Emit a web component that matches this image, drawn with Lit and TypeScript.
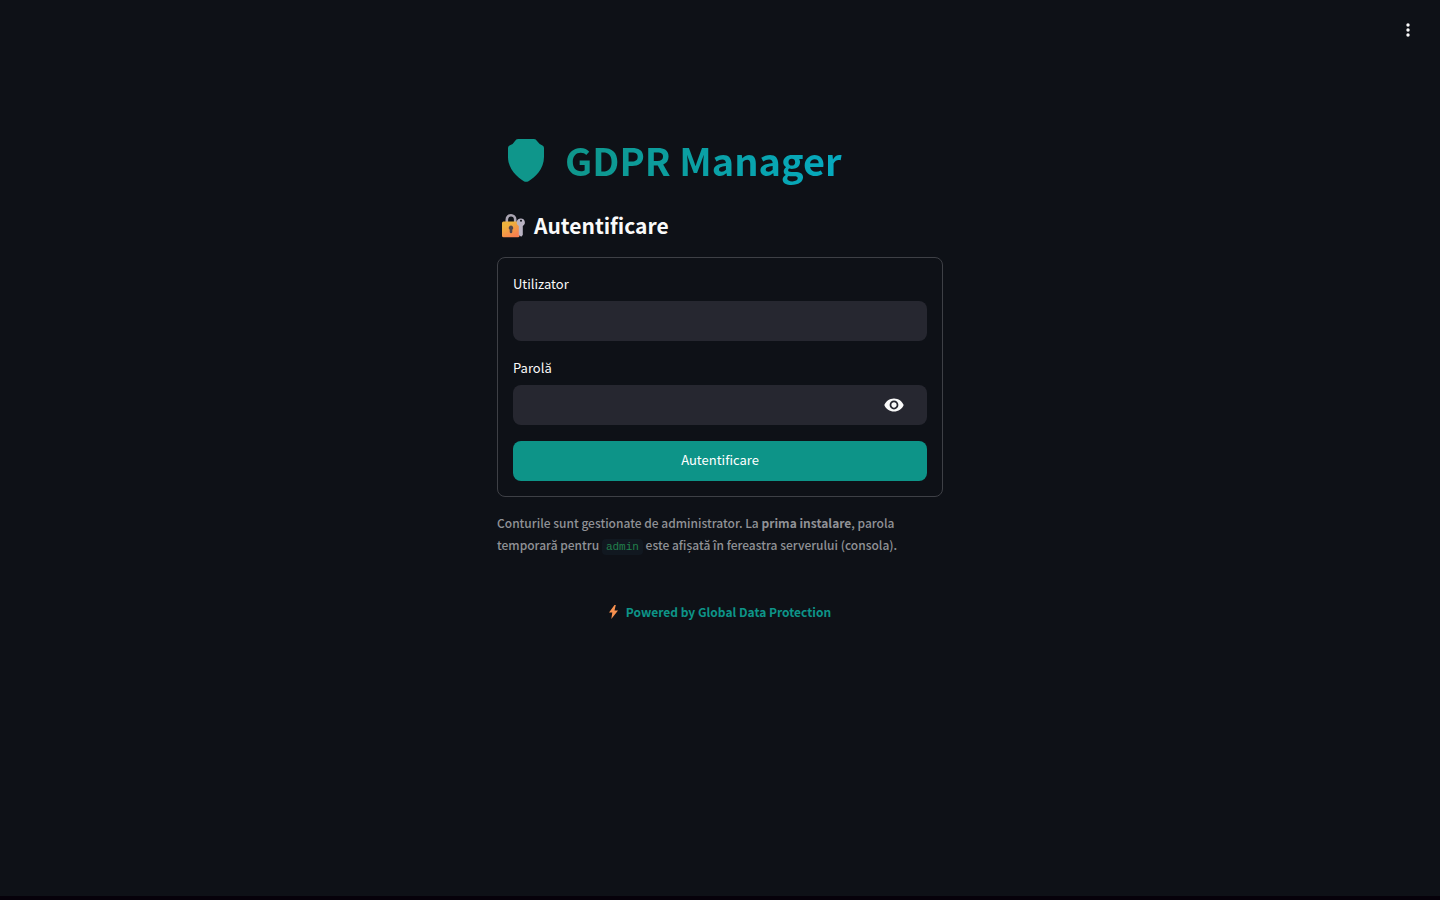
import { LitElement, html, css } from "lit";
import { customElement, state } from "lit/decorators.js";

@customElement("app-root")
export class AppRoot extends LitElement {
  @state() private revealed = false;

  static styles = css`
    :host {
      display: flex;
      flex-direction: column;
      box-sizing: border-box;
      min-height: 100vh;
      background: #0e1117;
      border-bottom: 4px solid #06010a;
      color: #fafafa;
      font-family: "Noto Sans CJK SC", "Noto Sans", sans-serif;
      font-size: 13px;
      line-height: 22px;
    }
    * {
      box-sizing: border-box;
    }
    button {
      border: 0;
      padding: 0;
      background: none;
      color: inherit;
      font: inherit;
      cursor: pointer;
    }
    svg {
      display: block;
    }
    .toolbar {
      display: flex;
      align-items: center;
      justify-content: flex-end;
      height: 60px;
      padding: 0 22px;
    }
    main {
      width: 100%;
      max-width: 478px;
      margin: 0 auto;
      padding: 72px 16px 16px;
    }
    h1,
    h2,
    p {
      margin: 0;
    }
    .brand {
      display: flex;
      align-items: center;
      gap: 20px;
      padding-left: 11px;
      font-size: 38px;
      line-height: 56px;
      font-weight: 700;
      white-space: nowrap;
    }
    .brand-name {
      background: linear-gradient(90deg, #0f968b, #06aabf);
      -webkit-background-clip: text;
      background-clip: text;
      color: transparent;
    }
    .heading {
      display: flex;
      align-items: center;
      gap: 8px;
      margin: 22px 0 17px;
      padding-left: 4px;
      font-size: 21px;
      line-height: 30px;
      font-weight: 700;
    }
    form {
      display: flex;
      flex-direction: column;
      gap: 16px;
      padding: 15px;
      border: 1px solid #3e4046;
      border-radius: 8px;
    }
    .field {
      display: flex;
      flex-direction: column;
      gap: 6px;
    }
    .box {
      display: flex;
      align-items: center;
      height: 40px;
      border-radius: 8px;
      background: #262730;
    }
    .box:focus-within {
      outline: 1px solid #0d9488;
    }
    .box input {
      flex: 1;
      min-width: 0;
      height: 100%;
      padding: 0 12px;
      border: 0;
      outline: 0;
      background: none;
      color: inherit;
      font: inherit;
    }
    .reveal {
      padding: 0 22px;
    }
    .submit {
      height: 40px;
      padding-bottom: 2px;
      border-radius: 8px;
      background: #0d9488;
      color: #ffffff;
    }
    .note {
      margin-top: 15px;
      color: #909196;
      font-size: 12px;
      font-weight: 500;
    }
    .note code {
      padding: 2px 4px;
      border-radius: 4px;
      background: #111820;
      color: #21804c;
      font-family: "Liberation Mono", monospace;
      font-size: 11px;
      font-weight: 400;
    }
    .powered {
      display: flex;
      align-items: center;
      justify-content: center;
      gap: 8px;
      margin-top: 43px;
      color: #0d9488;
      font-size: 12px;
      font-weight: 600;
    }
  `;

  render() {
    return html`
      <header class="toolbar">
        <button aria-label="Meniu">
          <svg width="20" height="20" viewBox="0 0 20 20" fill="#fafafa">
            <circle cx="10" cy="5" r="1.7" />
            <circle cx="10" cy="10" r="1.7" />
            <circle cx="10" cy="15" r="1.7" />
          </svg>
        </button>
      </header>
      <main>
        <h1 class="brand">
          <svg width="37" height="44" viewBox="0 0 37 44" fill="#0f968b">
            <path
              d="M10 1H26Q28 1 29 3Q31 6 34.500 7.500Q36 8.200 36 10V19C36 31 27 39.500 20.500 43.200Q18 44.500 15.800 43.200C9.500 39.500 0 31 0 19V10Q0 8.200 1.500 7.500Q5.500 6 7 3Q8 1 10 1Z"
            />
          </svg>
          <span class="brand-name">GDPR Manager</span>
        </h1>
        <h2 class="heading">
          <svg width="25" height="26" viewBox="0 -2 25 26">
            <defs>
              <linearGradient id="lock" x1="0" y1="0" x2="0.6" y2="1">
                <stop offset="0.3" stop-color="#edb23c" />
                <stop offset="1" stop-color="#f98050" />
              </linearGradient>
            </defs>
            <path d="M5.800 8.500V5.500A4.200 4.200 0 0 1 14.200 5.500V8.500" fill="none" stroke="#aaa5b2" stroke-width="2.600" />
            <rect x="1" y="7.500" width="17.500" height="15.800" rx="1.500" fill="url(#lock)" />
            <path d="M10 11.500a2.400 2.400 0 0 1 1.300 4.300V18a1.300 1.300 0 0 1-2.600 0V15.800A2.400 2.400 0 0 1 10 11.500Z" fill="#50454b" />
            <path
              fill="#b9b3c3"
              fill-rule="evenodd"
              d="M20 4.500a4 4 0 0 1 1.800 7.500V21L20.200 22.800L17.800 21V12A4 4 0 0 1 20 4.500ZM20 5.800a.9.9 0 1 0 .01 0Z"
            />
          </svg>
          Autentificare
        </h2>
        <form @submit=${(e: Event) => e.preventDefault()}>
          <div class="field">
            <label for="user">Utilizator</label>
            <div class="box"><input id="user" type="text" autocomplete="username" /></div>
          </div>
          <div class="field">
            <label for="password">Parolă</label>
            <div class="box">
              <input id="password" type=${this.revealed ? "text" : "password"} autocomplete="current-password" />
              <button
                class="reveal"
                type="button"
                aria-label="Arată parola"
                @click=${() => (this.revealed = !this.revealed)}
              >
                <svg width="22" height="20" viewBox="-0.500 1.500 25 21" fill="#fafafa">
                  <path
                    d="M12 4.500C7 4.500 2.730 7.610 1 12c1.730 4.390 6 7.500 11 7.500s9.270-3.110 11-7.500c-1.730-4.390-6-7.500-11-7.500zM12 17c-2.760 0-5-2.240-5-5s2.240-5 5-5 5 2.240 5 5-2.240 5-5 5zm0-8c-1.660 0-3 1.340-3 3s1.340 3 3 3 3-1.340 3-3-1.340-3-3-3z"
                  />
                </svg>
              </button>
            </div>
          </div>
          <button class="submit" type="submit">Autentificare</button>
        </form>
        <p class="note">
          Conturile sunt gestionate de administrator. La <strong>prima instalare</strong>, parola temporară pentru
          <code>admin</code> este afișată în fereastra serverului (consola).
        </p>
        <p class="powered">
          <svg width="9" height="14" viewBox="0 0 9 14">
            <path d="M5.500 0L0 7.500H3.300L2.300 14L9 5.500H5.500L6.800 0Z" fill="#f9914f" />
          </svg>
          <span>Powered by Global Data Protection</span>
        </p>
      </main>
    `;
  }
}
